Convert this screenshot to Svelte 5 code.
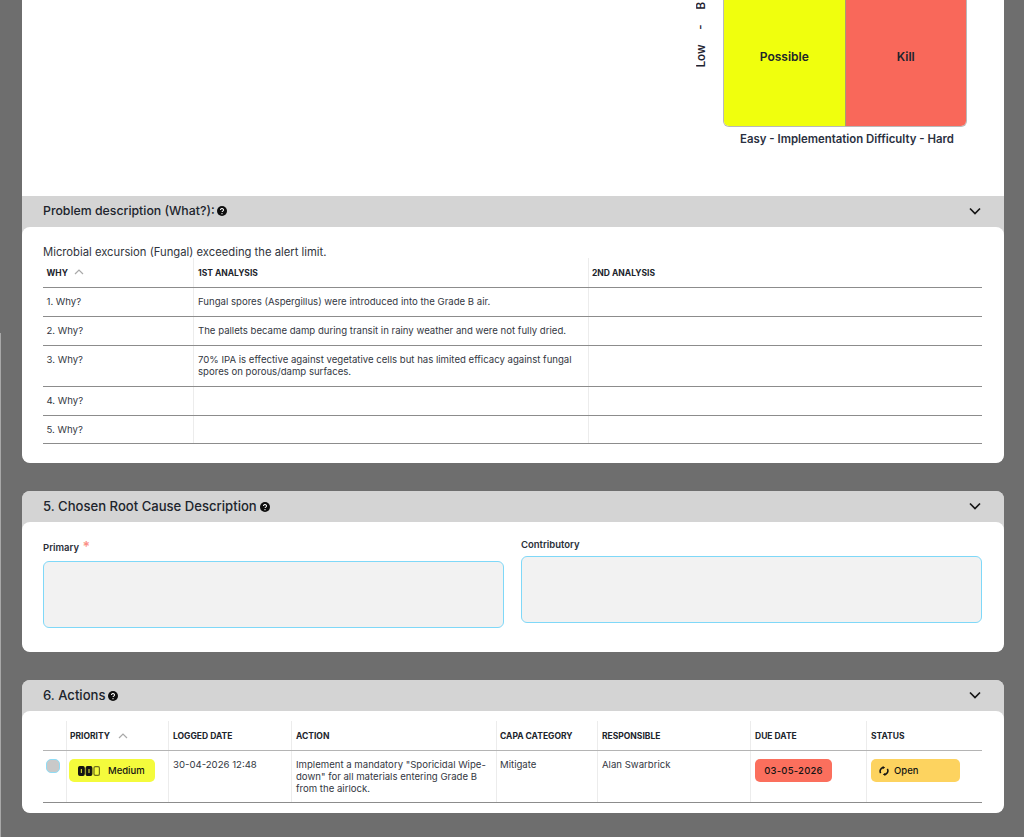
<script>
  const whys = [
    { n: '1. Why?', a: 'Fungal spores (Aspergillus) were introduced into the Grade B air.', h: 28.7 },
    { n: '2. Why?', a: 'The pallets became damp during transit in rainy weather and were not fully dried.', h: 29 },
    { n: '3. Why?', a: '70% IPA is effective against vegetative cells but has limited efficacy against fungal spores on porous/damp surfaces.', h: 41 },
    { n: '4. Why?', a: '', h: 29 },
    { n: '5. Why?', a: '', h: 28.3 }
  ];
</script>

{#snippet help()}
  <svg class="help" viewBox="0 0 10 10" aria-hidden="true">
    <circle cx="5" cy="5" r="5" fill="#0d0d0d" />
    <path d="M3.5 3.9a1.5 1.4 0 1 1 2.3 1.2c-.5.3-.8.5-.8 1" fill="none" stroke="#fff" stroke-width="1.1" />
    <circle cx="5" cy="7.7" r=".65" fill="#fff" />
  </svg>
{/snippet}

{#snippet chevron()}
  <svg class="chev" viewBox="0 0 12 8" aria-hidden="true">
    <path d="M1 1.5l5 5 5-5" fill="none" stroke="#161616" stroke-width="1.7" />
  </svg>
{/snippet}

{#snippet sortUp()}
  <svg class="sort" viewBox="0 0 10 6" aria-hidden="true">
    <path d="M1 5l4-4 4 4" fill="none" stroke="#a9a9a9" stroke-width="1.2" />
  </svg>
{/snippet}

<div class="page">
  <div class="edge"></div>
  <div class="card">
    <section class="matrix-area">
      <div class="matrix-wrap">
        <div class="y-label"><span>Low - B</span></div>
        <div class="matrix-col">
          <div class="matrix">
            <div class="cell yellow">Possible</div>
            <div class="cell red">Kill</div>
          </div>
          <div class="x-label">Easy - Implementation Difficulty - Hard</div>
        </div>
      </div>
    </section>

    <header class="bar bar-sm">
      <h3 class="small">Problem description (What?): {@render help()}</h3>
      {@render chevron()}
    </header>
    <div class="panel why-panel">
      <p class="desc">Microbial excursion (Fungal) exceeding the alert limit.</p>
      <div class="why-table">
        <div class="wrow whead">
          <div class="wc"><span class="why-h">WHY</span>{@render sortUp()}</div>
          <div class="wc">1ST ANALYSIS</div>
          <div class="wc">2ND ANALYSIS</div>
        </div>
        {#each whys as w}
          <div class="wrow body" style="height: {w.h}px">
            <div class="wc">{w.n}</div>
            <div class="wc"><span class="ans">{w.a}</span></div>
            <div class="wc"></div>
          </div>
        {/each}
      </div>
    </div>
  </div>

  <div class="card">
    <header class="bar">
      <h3>5. Chosen Root Cause Description {@render help()}</h3>
      {@render chevron()}
    </header>
    <div class="panel root-panel">
      <div class="field primary">
        <div class="lbl">Primary <span class="req">*</span></div>
        <div class="ta"></div>
      </div>
      <div class="field contributory">
        <div class="lbl">Contributory</div>
        <div class="ta"></div>
      </div>
    </div>
  </div>

  <div class="card">
    <header class="bar">
      <h3>6. Actions {@render help()}</h3>
      {@render chevron()}
    </header>
    <div class="panel actions-panel">
      <div class="act-table">
        <div class="arow ahead">
          <div class="ac"></div>
          <div class="ac">PRIORITY {@render sortUp()}</div>
          <div class="ac">LOGGED DATE</div>
          <div class="ac">ACTION</div>
          <div class="ac">CAPA CATEGORY</div>
          <div class="ac">RESPONSIBLE</div>
          <div class="ac">DUE DATE</div>
          <div class="ac">STATUS</div>
        </div>
        <div class="arow abody">
          <div class="ac"><span class="check"></span></div>
          <div class="ac">
            <span class="pill prio">
              <svg class="bars" viewBox="0 0 22 10" aria-hidden="true">
                <rect x="0.6" y="0.6" width="5.6" height="8.8" rx="1.4" fill="#141414" stroke="#141414" stroke-width="1.2" />
                <rect x="8.2" y="0.6" width="5.6" height="8.8" rx="1.4" fill="#141414" stroke="#141414" stroke-width="1.2" />
                <rect x="16" y="0.6" width="5.4" height="8.8" rx="1.4" fill="none" stroke="#70701a" stroke-width="1.2" />
                <path d="M3.4 3v4M11 3v4" stroke="#c8ce30" stroke-width="1.2" />
              </svg>
              Medium
            </span>
          </div>
          <div class="ac date">30-04-2026 12:48</div>
          <div class="ac">Implement a mandatory "Sporicidal Wipe-down" for all materials entering Grade B from the airlock.</div>
          <div class="ac">Mitigate</div>
          <div class="ac">Alan Swarbrick</div>
          <div class="ac"><span class="pill due">03-05-2026</span></div>
          <div class="ac">
            <span class="pill status">
              <svg class="sync" viewBox="0 0 12 12" aria-hidden="true">
                <path d="M2 8.6A4.6 4.6 0 0 1 5.2 1.7M10 3.4a4.6 4.6 0 0 1-3.2 6.9" fill="none" stroke="#141414" stroke-width="1.9" />
                <path d="M4.4 0l3 1.9-3 1.9zM7.6 12l-3-1.9 3-1.9z" fill="#141414" />
              </svg>
              Open
            </span>
          </div>
        </div>
      </div>
    </div>
  </div>
</div>

<style>
  :global(body) {
    margin: 0;
    background: #6e6e6e;
    font-family: Inter, "Liberation Sans", sans-serif;
    color: #1f2430;
  }
  .page {
    position: relative;
    height: 837px;
    overflow: hidden;
    padding: 0 20px 0 22px;
    display: flex;
    flex-direction: column;
    gap: 28px;
    box-sizing: border-box;
  }
  .edge {
    position: absolute;
    left: 0;
    top: 333px;
    bottom: 0;
    width: 1px;
    background: #a8a8a8;
  }
  .card {
    background: #d4d4d4;
    border-radius: 8px;
    overflow: hidden;
    flex: none;
  }
  .card:nth-child(2) {
    border-radius: 0 0 8px 8px;
  }
  .matrix-area {
    background: #fff;
    height: 196px;
    display: flex;
    justify-content: flex-end;
    overflow: hidden;
  }
  .matrix-wrap {
    display: flex;
    margin-right: 37px;
    align-items: flex-start;
  }
  .y-label {
    width: 27px;
    height: 127px;
    position: relative;
    overflow: hidden;
    font-size: 11.4px;
    font-weight: 600;
    color: #1f2430;
  }
  .y-label span {
    position: absolute;
    left: -3px;
    bottom: 60px;
    writing-mode: vertical-rl;
    transform: rotate(180deg);
    white-space: pre;
    line-height: 16px;
    word-spacing: 12px;
  }
  .matrix {
    width: 244px;
    height: 127px;
    display: flex;
    box-sizing: border-box;
    border-radius: 0 0 6px 6px;
    overflow: hidden;
    border: 1px solid #b9b9b9;
    border-top: 0;
  }
  .cell {
    flex: 1;
    display: flex;
    align-items: center;
    justify-content: center;
    padding-bottom: 14px;
    box-sizing: border-box;
    font-size: 12px;
    font-weight: 600;
    color: #20242c;
  }
  .yellow { background: #f0ff0d; }
  .red { background: #f9685a; border-left: 1px solid #a89c70; }
  .x-label {
    font-size: 11.4px;
    font-weight: 600;
    text-align: center;
    margin-top: 5px;
    padding-left: 4px;
    line-height: 14px;
    color: #2a3040;
  }
  .bar {
    height: 31px;
    display: flex;
    align-items: center;
    justify-content: space-between;
    padding: 0 23px 0 21px;
    background: #d4d4d4;
  }
  h3 {
    margin: 0;
    font-size: 13.1px;
    font-weight: 500;
    line-height: 29px;
    height: 31px;
    display: flex;
    align-items: center;
    gap: 3px;
    color: #20242c;
  }
  h3.small { font-size: 12.3px; font-weight: 550; line-height: 25px; padding-bottom: 3px; box-sizing: border-box; gap: 2px; }
  .bar-sm .chev { margin-top: -2px; }
  .help { width: 10px; height: 10px; margin-top: 1px; }
  .chev { width: 12px; height: 8px; margin-top: -1px; }
  .sort { width: 10px; height: 6px; margin-left: 6px; }
  .panel {
    background: #fff;
    border-radius: 8px;
    box-sizing: border-box;
  }
  .why-panel {
    height: 236px;
    padding: 19px 22px 0 21px;
  }
  .desc {
    margin: 0;
    font-size: 11.26px;
    line-height: 12px;
    color: #30343c;
  }
  .wrow {
    display: grid;
    grid-template-columns: 150px 395px 1fr;
    border-bottom: 1px solid #8c8c8c;
    box-sizing: border-box;
  }
  .whead { height: 30px; font-size: 8.5px; font-weight: 700; color: #20242c; }
  .whead .wc { padding-top: 10px; line-height: 10px; }
  .whead .wc:nth-child(3) { padding-left: 3px; }
  .why-h { font-size: 8.5px; }
  .body { font-size: 9.6px; color: #33373f; line-height: 12px; }
  .body .wc { padding-top: 8px; }
  .wc {
    padding-left: 4px;
    border-left: 1px solid #ececec;
    display: flex;
    align-items: flex-start;
  }
  .wc:first-child { border-left: 0; padding-left: 3.5px; }
  .whead .sort { margin-top: 1px; }
  .ans { max-width: 385px; }
  .root-panel {
    height: 130px;
    padding: 0 22px 0 21px;
    display: grid;
    grid-template-columns: 461px 461px;
    column-gap: 17px;
  }
  .lbl {
    font-size: 9.5px;
    font-weight: 600;
    line-height: 12px;
    color: #2a2e38;
    height: 12px;
  }
  .req { color: #fb8f85; font-size: 14px; line-height: 10px; vertical-align: -1px; margin-left: 1px; }
  .primary { padding-top: 20px; }
  .contributory { padding-top: 17px; }
  .primary .lbl { margin-bottom: 7px; }
  .contributory .lbl { margin-bottom: 5px; }
  .ta {
    height: 67px;
    box-sizing: border-box;
    background: #f2f2f2;
    border: 1px solid #7fd8f8;
    border-radius: 6px;
  }
  .actions-panel {
    height: 102px;
    padding: 10px 22px 0 21px;
  }
  .arow {
    display: grid;
    grid-template-columns: 23px 102px 123px 205px 101px 153px 116px 1fr;
    box-sizing: border-box;
  }
  .ahead {
    height: 30px;
    border-bottom: 1px solid #b4b4b4;
    font-size: 8.5px;
    font-weight: 700;
    color: #20242c;
  }
  .ahead .ac { padding-top: 10px; line-height: 10px; }
  .abody {
    height: 52px;
    border-bottom: 1px solid #8c8c8c;
    font-size: 9.6px;
    color: #33373f;
    line-height: 12px;
  }
  .ac {
    padding-left: 4px;
    padding-right: 6px;
    border-left: 1px solid #ececec;
    box-sizing: border-box;
  }
  .ac:first-child { border-left: 0; padding: 0; }
  .ac:nth-child(2), .ac:nth-child(5) { padding-left: 3px; }
  .abody .ac:first-child { padding: 8px 0 0 3px; }
  .abody .ac:nth-child(n+2) { padding-top: 8px; }
  .abody .ac:nth-child(2),
  .abody .ac:nth-child(7),
  .abody .ac:nth-child(8) { padding-top: 3px; }
  .check {
    display: block;
    width: 14px;
    height: 14px;
    box-sizing: border-box;
    background: #c9c9c9;
    border: 1.5px solid #8fdcf5;
    border-radius: 5px;
  }
  .pill {
    display: flex;
    align-items: center;
    height: 23px;
    box-sizing: border-box;
    border-radius: 5px;
    font-size: 9.5px;
    font-weight: 500;
    color: #141414;
    margin-top: 5px;
  }
  .prio {
    width: 86px;
    background: #f4fb3c;
    margin-left: -1px;
    padding-left: 9px;
    gap: 8px;
  }
  .bars { width: 22px; height: 10px; }
  .due {
    width: 77px;
    background: #fb6f5d;
    justify-content: center;
    letter-spacing: .2px;
  }
  .status {
    width: 89px;
    background: #fdd35f;
    padding-left: 8px;
    gap: 5px;
  }
  .sync { width: 10px; height: 10px; }
</style>
